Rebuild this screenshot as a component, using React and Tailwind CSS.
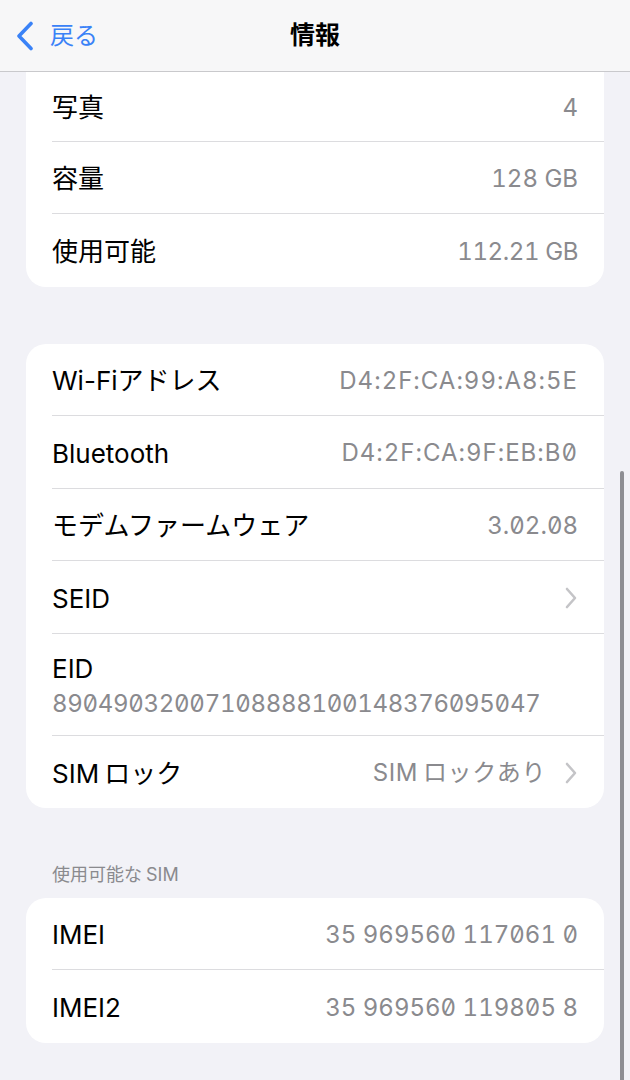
import React from "react";

const FONT = "font-['Inter','Noto_Sans_CJK_JP',sans-serif]";

function Chevron() {
  return (
    <svg width="14" height="22" viewBox="0 0 14 22" className="shrink-0">
      <path d="M3 2 L11 11 L3 20" fill="none" stroke="#c4c4c7" strokeWidth="2.6" strokeLinecap="round" strokeLinejoin="round" />
    </svg>
  );
}

function Row({ label, value, chevron, last, h = "h-[72px]", valueClass = "" }) {
  return (
    <div className={`pl-[26px] ${h}`}>
      <div className={`flex h-full items-center justify-between pr-[26px] pt-[2px] ${last ? "" : "border-b border-[#dcdcdf]"}`}>
        <span className="text-[26px] text-black">{label}</span>
        <span className={`flex items-center gap-[18px] text-[24px] text-[#8a8a8e] tabular-nums slashed-zero ${valueClass}`}>
          {value}
          {chevron && <Chevron />}
        </span>
      </div>
    </div>
  );
}

const SimLock = ({ suffix }) => (
  <span>
    SIM<span className="ml-[5px]">ロック{suffix}</span>
  </span>
);

export default function App() {
  return (
    <div className={`relative h-[1080px] w-[630px] overflow-hidden bg-[#f2f2f7] ${FONT}`}>
      {/* Nav bar */}
      <div className="relative flex h-[72px] items-center border-b border-[#c9c9cc] bg-[#f7f7f8]">
        <div className="flex items-center pl-[15px]">
          <svg width="20" height="30" viewBox="0 0 20 30">
            <path d="M16 2.5 L4 15 L16 27.5" fill="none" stroke="#3a82f7" strokeWidth="3.6" strokeLinecap="round" strokeLinejoin="round" />
          </svg>
          <span className="ml-[15px] text-[24px] text-[#3a82f7]">戻る</span>
        </div>
        <span className="absolute left-1/2 -translate-x-1/2 text-[25px] font-bold text-black">情報</span>
      </div>

      {/* Card 1 (scrolled, top cut) */}
      <div className="mx-[26px] rounded-b-[20px] bg-white">
        <Row label="写真" value="4" h="h-[70px]" />
        <Row label="容量" value="128 GB" />
        <Row label="使用可能" value="112.21 GB" last h="h-[73px]" valueClass="tracking-[-0.4px]" />
      </div>

      {/* Card 2 */}
      <div className="mx-[26px] mt-[57px] rounded-[20px] bg-white">
        <Row label="Wi-Fiアドレス" value="D4:2F:CA:99:A8:5E" valueClass="tracking-[1px]" />
        <Row label="Bluetooth" value="D4:2F:CA:9F:EB:B0" h="h-[73px]" valueClass="tracking-[1px]" />
        <Row label="モデムファームウェア" value="3.02.08" />
        <Row label="SEID" value="" chevron h="h-[73px]" />
        <div className="pl-[26px]">
          <div className="flex h-[102px] flex-col justify-center border-b border-[#dcdcdf] pr-[26px] pt-[2px]">
            <span className="text-[26px] leading-[32px] text-black">EID</span>
            <span className="mt-[4px] text-[24px] leading-[30px] tracking-[-0.3px] text-[#8a8a8e] tabular-nums slashed-zero">
              89049032007108888100148376095047
            </span>
          </div>
        </div>
        <Row label={<SimLock />} value={<SimLock suffix="あり" />} chevron last valueClass="tracking-[0.6px]" />
      </div>

      {/* Section header */}
      <div className="mt-[54px] pl-[52px] text-[18px] leading-[26px] text-[#8a8a8e]">
        使用可能な<span className="ml-[4px]">SIM</span>
      </div>

      {/* Card 3 */}
      <div className="mx-[26px] mt-[10px] rounded-[20px] bg-white">
        <Row label="IMEI" value="35 969560 117061 0" />
        <Row label="IMEI2" value="35 969560 119805 8" last h="h-[73px]" />
      </div>

      {/* Scroll indicator */}
      <div className="absolute right-[6px] top-[471px] h-[640px] w-[4px] rounded-full bg-[#8e8e93]" />
    </div>
  );
}
